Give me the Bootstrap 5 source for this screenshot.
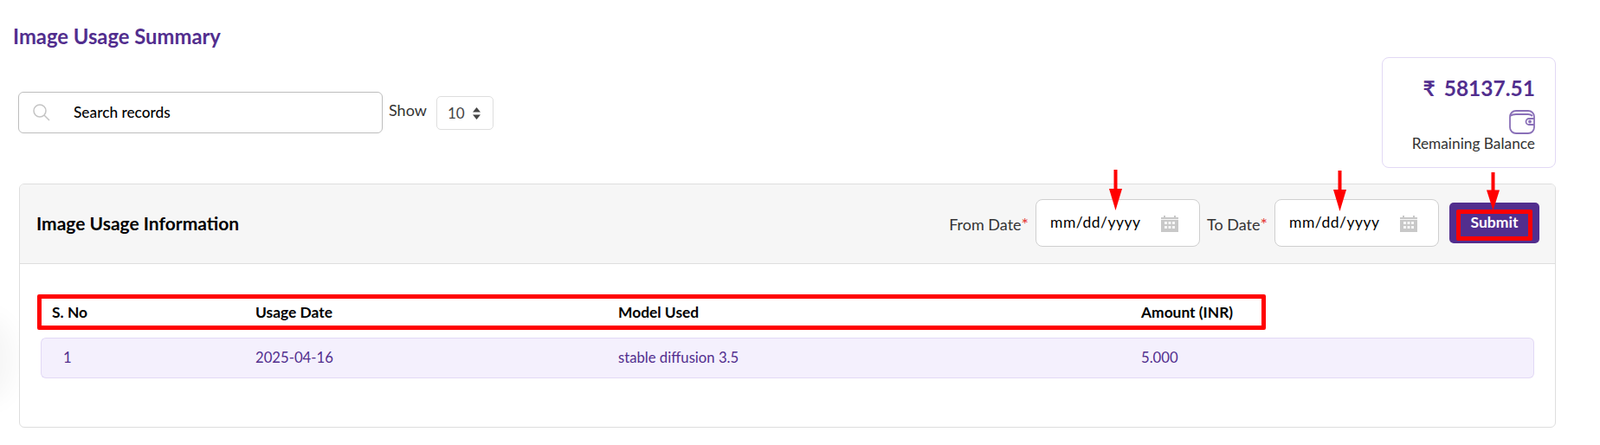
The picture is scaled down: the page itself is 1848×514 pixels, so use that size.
<!DOCTYPE html>
<html lang="en">
<head>
<meta charset="utf-8">
<title>Image Usage Summary</title>
<link href="https://cdn.jsdelivr.net/npm/bootstrap@5.3.0/dist/css/bootstrap.min.css" rel="stylesheet">
<style>
html,body{height:514px;overflow:hidden}
body{font-family:"Lato","Liberation Sans",sans-serif;background:#fff;color:#000;position:relative;padding:0 51px 0 15px}
.page-title{font-size:23.8px;font-weight:700;color:#522e8e;line-height:26px;margin:0;padding-top:29px}
.tool-row{margin:11px 0 19px 6px;height:127px}
.search-box{width:421px;height:48px;border:1px solid #bdbdbd;border-radius:6px;margin-top:40px;padding-left:15px}
.search-box input{border:0;outline:0;background:transparent;font-size:17.3px;font-weight:500;margin-left:26px;flex:1;min-width:0;padding:0}
.search-box input::placeholder{color:#000;opacity:1}
.show-label{font-size:18px;color:#333;margin:0 11px 0 7px;padding-top:48px}
.show-select{width:66px;height:39px;margin-top:45px;border:1px solid #dedede;border-radius:5px;font-size:17px;color:#444;padding:0 0 0 12px;background-size:11px 16px;background-position:right 13px center;background-image:url("data:image/svg+xml,%3Csvg xmlns='http://www.w3.org/2000/svg' viewBox='0 0 11 16'%3E%3Cpath fill='%23444' d='M5.500 1l4.500 5.500H1zM5.500 15L1 9.500h9z'/%3E%3C/svg%3E")}
.balance-box{width:201px;height:128px;border:1px solid #e2d9f5;border-radius:8px;padding:20px 23px 0 0;text-align:right}
.balance-num{font-size:24.5px;font-weight:700;line-height:30px;color:#522e8e;display:flex;justify-content:flex-end;gap:10px}
.balance-icon{display:block;margin:9px 0 1px auto}
.balance-cap{font-size:17.3px;line-height:20px;color:#333}
.usage-card{margin-left:7px;height:282px;border:1px solid #dedede;border-radius:6px;overflow:hidden}
.usage-head{height:92px;background:#f6f6f6;border-bottom:1px solid #dedede;padding:0 18px 2px 19px}
.usage-title{font-size:21px;font-weight:700;margin:0;color:#000;line-height:24px}
.date-label{font-size:18px;color:#333;margin:0 8px 0 0;white-space:nowrap}
.date-label b{font-weight:400;color:#e53935;font-size:20px}
.date-input{width:190px;height:55px;border:1px solid #cfcfcf;border-radius:8px;background:#fff;font-family:"Lato",sans-serif;font-size:17.500px;padding:0 23px 0 16px;margin-right:8px;color:#000;letter-spacing:.5px;outline:0}
.date-input::-webkit-calendar-picker-indicator{width:22px;height:22px;margin:0;padding:0;background-size:22px 22px;background-image:url("data:image/svg+xml,%3Csvg xmlns='http://www.w3.org/2000/svg' viewBox='0 0 22 22'%3E%3Cpath fill='%23c8c8c8' d='M1 4h3V2h2v2h10V2h2v2h3v17H1z'/%3E%3Cpath fill='%23f6f6f6' d='M1 6h20v1H1zM5 9h3v3H5zM9.500 9h3v3h-3zM14 9h3v3h-3zM5 14h3v3H5zM9.500 14h3v3h-3zM14 14h3v3h-3z'/%3E%3C/svg%3E")}
.submit-btn{width:104px;height:47px;margin-left:4px;background:#522e8e;border:0;border-radius:5px;color:#fff;font-weight:700;font-size:17.500px;padding:0}
.usage-body{padding:27px 24px 0 24px}
.usage-table{width:1725px;border-collapse:separate;border-spacing:0 7px;table-layout:fixed;margin:0}
.usage-table th{font-size:17.400px;font-weight:700;color:#000;padding:0 13px;height:44px;background:transparent;border:0}
.usage-table td{font-size:16.700px;color:#522e8e;padding:0 13px;height:47px;background:#f4f0fd;border:solid #e2d9f5;border-width:1px 0}
.usage-table td:first-child{border-left-width:1px;border-radius:6px 0 0 6px;padding-left:25px}
.usage-table td:last-child{border-right-width:1px;border-radius:0 6px 6px 0}
.w-sn{width:235px}.w-dt{width:419px}.w-md{width:604px}
.mark-box{position:absolute;border:5px solid #f00;border-radius:2px;pointer-events:none}
.mark-head{left:43px;top:340px;width:1419px;height:41px}
.mark-btn{left:1682px;top:242px;width:88px;height:36px}
.mark-arrow{position:absolute;width:15px;height:47px}
.glow{position:absolute;left:-40px;top:365px;width:56px;height:100px;border-radius:50%;background:#000;opacity:.035;filter:blur(14px)}
</style>
</head>
<body>
<div class="glow"></div>
<h1 class="page-title">Image Usage Summary</h1>
<div class="d-flex align-items-start tool-row">
  <div class="search-box d-flex align-items-center">
    <svg width="22" height="22" viewBox="0 0 22 22" fill="none" stroke="#c4c4c4" stroke-width="1.500"><circle cx="9" cy="9" r="7"/><path d="M14 14l6 6"/></svg>
    <input type="text" placeholder="Search records" aria-label="Search records">
  </div>
  <label class="show-label">Show</label>
  <select class="form-select show-select" aria-label="Show"><option>10</option></select>
  <div class="balance-box ms-auto">
    <div class="balance-num"><span>₹</span><span>58137.51</span></div>
    <svg class="balance-icon" width="30" height="29" viewBox="0 0 30 29" fill="none" stroke="#8a70b8" stroke-width="1.800"><path d="M8 2h14c4 0 7 3 7 7v12c0 4-3 7-7 7H8c-4 0-7-3-7-7V9c0-4 3-7 7-7z"/><path d="M1 8c2-1.500 4-2 7-2h14c2 0 4 1 5 2"/><path d="M29 11h-6c-2 0-3.500 1.600-3.500 3.500S21 18 23 18h6"/><circle cx="24" cy="14.500" r="1"/></svg>
    <div class="balance-cap">Remaining Balance</div>
  </div>
</div>
<div class="card usage-card">
  <div class="usage-head d-flex align-items-center">
    <h2 class="usage-title me-auto">Image Usage Information</h2>
    <label class="date-label">From Date<b>*</b></label>
    <input class="date-input" type="date" aria-label="From Date">
    <label class="date-label">To Date<b>*</b></label>
    <input class="date-input" type="date" aria-label="To Date">
    <button type="button" class="btn submit-btn">Submit</button>
  </div>
  <div class="usage-body">
    <table class="usage-table">
      <colgroup><col class="w-sn"><col class="w-dt"><col class="w-md"><col></colgroup>
      <thead><tr><th>S. No</th><th>Usage Date</th><th>Model Used</th><th>Amount (INR)</th></tr></thead>
      <tbody><tr><td>1</td><td>2025-04-16</td><td>stable diffusion 3.5</td><td>5.000</td></tr></tbody>
    </table>
  </div>
</div>
<div class="mark-box mark-head"></div>
<div class="mark-box mark-btn"></div>
<svg class="mark-arrow" style="left:1281px;top:196px" viewBox="0 0 15 47"><path fill="#f00" d="M5.500 0h4v22h5.500L7.500 47 0 22h5.500z"/></svg>
<svg class="mark-arrow" style="left:1540px;top:197px" viewBox="0 0 15 47"><path fill="#f00" d="M5.500 0h4v22h5.500L7.500 47 0 22h5.500z"/></svg>
<svg class="mark-arrow" style="left:1717px;top:199px;height:44px" viewBox="0 0 15 47" preserveAspectRatio="none"><path fill="#f00" d="M5.500 0h4v22h5.500L7.500 47 0 22h5.500z"/></svg>
<script src="https://cdn.jsdelivr.net/npm/bootstrap@5.3.0/dist/js/bootstrap.bundle.min.js"></script>
</body>
</html>
